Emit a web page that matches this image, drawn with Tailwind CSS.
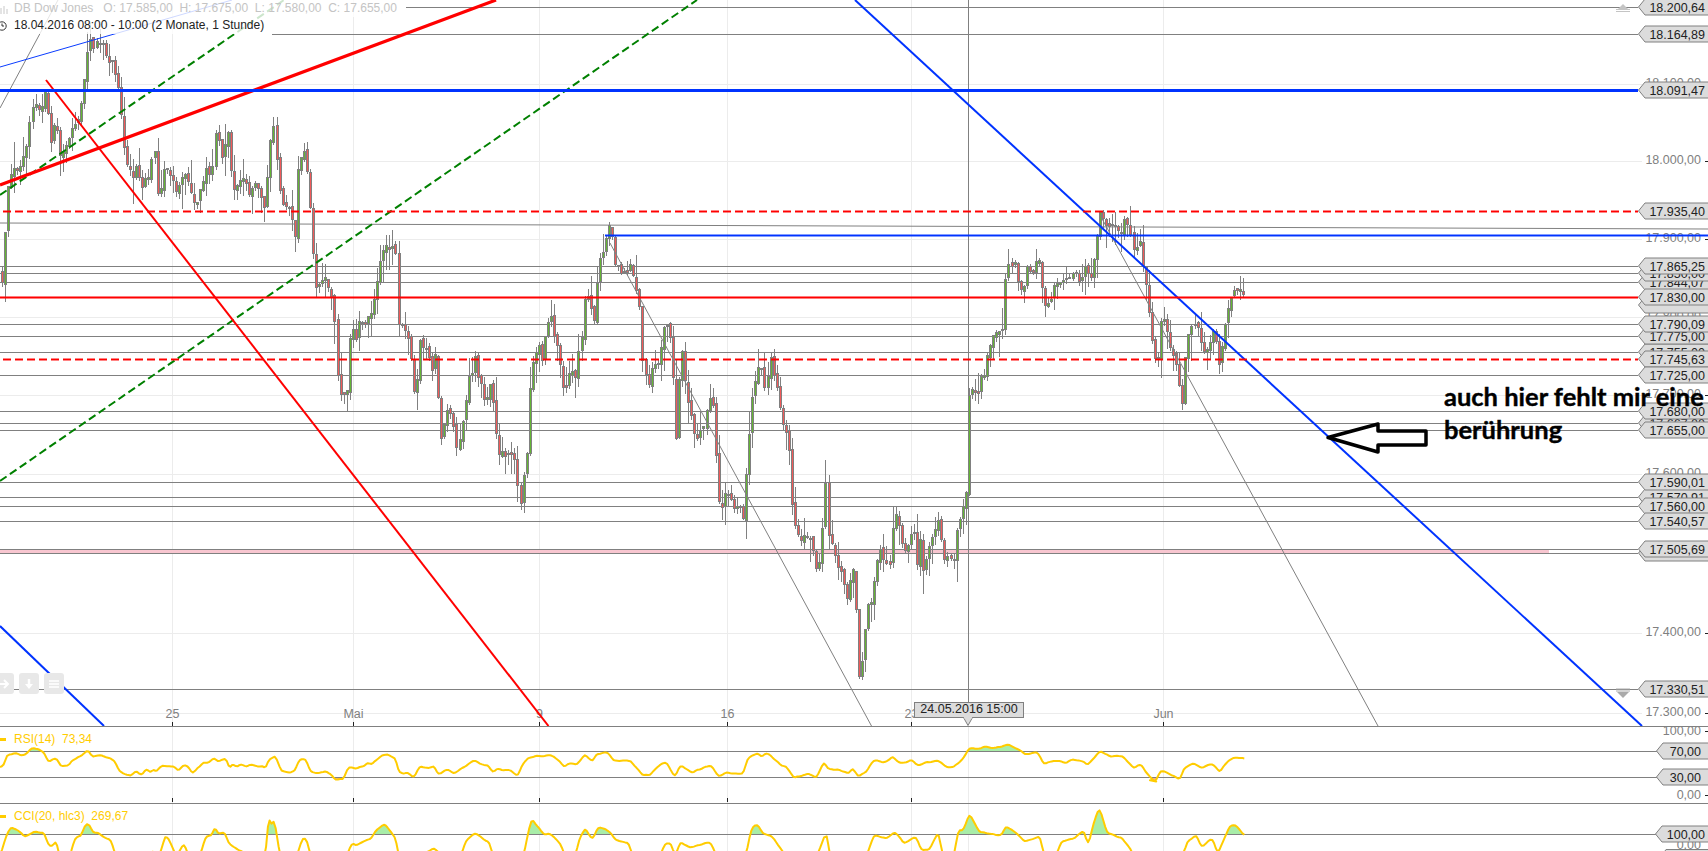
<!DOCTYPE html>
<html lang="de">
<head>
  <meta charset="UTF-8">
  <title>DB Dow Jones</title>
  <script src="https://cdn.jsdelivr.net/npm/@tailwindcss/browser@4"></script>
</head>
<body class="bg-white">
  <div class="flex flex-col w-[1708px] h-[851px] overflow-hidden bg-white font-['Liberation_Sans',Arial,sans-serif] text-[12.5px]">

    <!-- Hauptchart -->
    <section class="relative h-[727px] border-b border-[#808080]">
      <svg id="main" class="block" width="1708" height="726" viewBox="0 0 1708 726"></svg>

      <!-- Kopfzeilen -->
      <div class="absolute left-0 top-0 flex flex-col items-start leading-[17px] text-[12px]">
        <div class="flex items-center h-[17px] w-[406px] bg-white/80 text-[#c4c4c4]">
          <svg class="shrink-0 mr-[6px]" width="8" height="12" viewBox="0 0 8 12"><path d="M1 5v6M4 3v8M7 6v5" stroke="#c8c8c8" fill="none"/></svg>
          <span class="whitespace-pre">DB Dow Jones   O: 17.585,00  H: 17.675,00  L: 17.580,00  C: 17.655,00</span>
        </div>
        <div class="flex items-center h-[17px] w-[272px] bg-white/80 text-[#222]">
          <svg class="shrink-0 mr-[6px]" width="8" height="12" viewBox="0 0 8 12"><circle cx="2" cy="6" r="4.2" stroke="#333" fill="none"/><path d="M2 3.5V6h2" stroke="#333" fill="none"/></svg>
          <span class="whitespace-nowrap">18.04.2016 08:00 - 10:00 (2 Monate, 1 Stunde)</span>
        </div>
      </div>

      <!-- Zoom-Buttons -->
      <div class="absolute left-0 top-[673px] flex gap-[5px] -ml-[6px]">
        <div class="flex items-center justify-center w-[20px] h-[21px] rounded-[3px] bg-[#e8e8e8]">
          <svg width="12" height="10" viewBox="0 0 12 10"><path d="M0 5h9M6 1l4 4-4 4" stroke="#fff" stroke-width="2" fill="none"/></svg>
        </div>
        <div class="flex items-center justify-center w-[20px] h-[21px] rounded-[3px] bg-[#e8e8e8]">
          <svg width="10" height="12" viewBox="0 0 10 12"><path d="M5 1v7" stroke="#fff" stroke-width="2.5"/><path d="M1 6h8L5 11z" fill="#fff"/></svg>
        </div>
        <div class="flex items-center justify-center w-[20px] h-[21px] rounded-[3px] bg-[#e8e8e8]">
          <svg width="12" height="14" viewBox="0 0 12 14"><path d="M1 4h10M1 7h10M1 10h10" stroke="#fff" stroke-width="1.6"/></svg>
        </div>
      </div>

      <!-- Datums-Tooltip -->
      <div class="absolute left-[914px] top-[702px] w-[110px] h-[16px] bg-[#dcdcdc] border border-[#808080] text-[#222] text-center leading-[13px]">24.05.2016 15:00</div>
      <svg class="absolute left-[960px] top-[716px]" width="16" height="11" viewBox="0 0 16 11"><path d="M3.5 1.5 8 9.5l4.5-8" fill="#dcdcdc" stroke="#808080"/><path d="M4 1h8v1.5H4z" fill="#dcdcdc"/></svg>

      <!-- Notiz -->
      <div class="absolute left-[1444px] top-[380px] flex flex-col font-['Lato',sans-serif] font-bold text-[25.5px] text-black leading-[33px] whitespace-nowrap [-webkit-text-stroke:0.4px_black]">
        <span>auch hier fehlt mir eine</span>
        <span>berührung</span>
      </div>
    </section>

    <!-- RSI -->
    <section class="relative h-[77px] border-b border-[#808080]">
      <svg id="rsi" class="block" width="1708" height="76" viewBox="0 727 1708 76"></svg>
      <div class="absolute left-0 top-[3px] flex items-center gap-[8px] text-[12px] text-[#ffcc00] whitespace-pre">
        <span class="w-[6px] h-[3px] bg-[#ffcc00]"></span><span>RSI(14)  73,34</span>
      </div>
    </section>

    <!-- CCI -->
    <section class="relative flex-1">
      <svg id="cci" class="block" width="1708" height="47" viewBox="0 804 1708 47"></svg>
      <div class="absolute left-0 top-[3px] flex items-center gap-[8px] text-[12px] text-[#ffcc00] whitespace-pre">
        <span class="w-[6px] h-[3px] bg-[#ffcc00]"></span><span>CCI(20, hlc3)  269,67</span>
      </div>
    </section>
  </div>

  <script>
    const FONT = "Liberation Sans, Arial, sans-serif";
    const GRAY = "#808080";
    const GRID = "#ececec";
    const TIME_X = [172, 353, 539, 727, 911, 1163];
    const TIME_NAMES = ["25", "Mai", "9", "16", "23", "Jun"];

    // Kursverlauf in Pixeln (x, y), von Hand aus dem Chart abgelesen
    const trace = [[1,272],[3,290],[5,232],[7,193],[12,170],[18,172],[22,160],[26,150],[30,117],[35,100],[39,112],[42,110],[46,90],[50,147],[53,130],[56,120],[60,160],[65,150],[70,135],[75,125],[80,110],[85,75],[88,50],[90,35],[93,50],[97,44],[100,40],[107,58],[113,60],[118,90],[122,130],[126,160],[133,180],[137,165],[142,185],[148,180],[154,150],[158,200],[164,165],[170,175],[175,190],[185,175],[195,205],[200,195],[207,170],[212,175],[215,130],[222,155],[228,130],[232,190],[242,180],[250,195],[258,185],[265,215],[270,140],[274,130],[280,200],[290,215],[295,240],[298,170],[303,150],[308,180],[312,240],[316,290],[325,280],[332,300],[335,330],[338,380],[342,400],[347,395],[350,330],[356,340],[360,320],[366,325],[372,310],[378,275],[384,243],[392,250],[397,260],[398,320],[405,335],[410,350],[413,390],[416,385],[420,340],[426,350],[432,370],[435,350],[438,395],[440,445],[445,420],[450,410],[455,440],[458,450],[462,430],[468,383],[475,360],[480,385],[485,400],[490,385],[495,410],[497,450],[505,455],[512,450],[515,465],[518,495],[520,510],[523,480],[527,450],[529,390],[532,370],[537,345],[543,360],[546,330],[551,320],[555,340],[559,345],[562,387],[565,395],[570,365],[575,380],[580,340],[583,330],[585,293],[590,300],[592,320],[595,330],[597,273],[600,258],[603,250],[607,238],[610,215],[612,240],[615,268],[622,273],[625,275],[630,265],[635,280],[637,290],[640,310],[641,330],[643,370],[645,375],[648,385],[652,370],[655,367],[658,365],[661,345],[663,325],[668,325],[671,340],[672,360],[675,400],[676,443],[678,400],[679,385],[682,350],[684,370],[690,417],[693,420],[695,447],[700,433],[704,425],[708,397],[712,395],[715,440],[717,490],[720,510],[727,490],[732,505],[740,510],[744,520],[746,480],[748,465],[750,420],[752,403],[760,360],[765,387],[770,360],[773,373],[777,387],[780,407],[782,427],[787,433],[790,467],[792,507],[793,530],[797,527],[800,540],[805,540],[809,537],[813,547],[817,570],[818,583],[820,550],[822,533],[825,490],[827,480],[829,550],[832,540],[838,573],[842,570],[845,597],[848,600],[852,570],[855,560],[857,657],[859,680],[862,660],[864,633],[868,607],[872,600],[877,567],[880,550],[885,567],[892,560],[893,513],[897,513],[900,537],[903,550],[907,547],[913,530],[917,563],[919,527],[923,568],[927,553],[932,540],[935,530],[940,520],[943,560],[950,557],[953,572],[957,530],[962,510],[965,503],[967,483],[968,433],[969,387],[973,387],[977,400],[980,382],[983,380],[988,357],[992,340],[997,330],[1002,335],[1004,293],[1007,263],[1010,270],[1013,257],[1017,277],[1023,293],[1028,263],[1032,283],[1037,252],[1040,263],[1043,300],[1047,307],[1052,295],[1057,280],[1067,285],[1072,272],[1080,287],[1085,263],[1090,280],[1095,252],[1100,217],[1108,233],[1113,222],[1120,233],[1125,222],[1130,233],[1135,257],[1140,242],[1147,293],[1150,327],[1157,373],[1160,323],[1163,313],[1168,333],[1172,357],[1177,367],[1183,413],[1185,360],[1190,327],[1195,320],[1202,347],[1208,350],[1213,328],[1218,353],[1220,380],[1223,337],[1230,303],[1233,287],[1240,287],[1245,293]];

    // Indikatoren: abgelesene Punkte der Ausschnitte
    const crop = (pts, ox, oy, sx) => pts.map(p => [ox + p[0] * sx, oy + p[1] / 3]);
    const rsiRaw = [
      ...crop([[0,385],[10,375],[20,345],[45,338],[65,348],[90,325],[110,330],[125,340],[135,365],[160,355],[170,378],[195,375],[200,360],[225,350],[248,328],[255,352],[280,345],[290,352],[310,355],[325,370],[330,390],[350,402],[370,408],[378,392],[395,405],[410,388],[425,395],[430,380],[435,400],[455,375],[480,380],[490,378],[497,395],[512,375],[525,380],[540,402],[565,370],[585,366],[600,355],[610,365],[635,355],[640,385],[650,375],[665,380],[675,375],[690,380],[705,375],[715,380],[740,378],[745,390],[750,358],[775,350],[783,390],[805,395],[810,400],[825,392],[840,358],[855,358],[870,395],[880,400],[900,398],[915,395],[925,403],[940,420],[965,418],[972,382],[985,380],[995,385],[1020,378],[1030,368],[1040,375],[1060,352],[1075,344],[1095,346],[1110,360],[1115,395],[1135,402],[1142,395],[1158,414],[1175,380],[1195,385],[1213,378],[1228,405],[1240,395],[1250,388],[1270,400],[1300,380],[1325,360],[1350,372],[1365,378],[1380,398],[1395,385],[1410,393],[1430,390],[1450,408],[1460,380],[1480,352],[1510,348],[1525,350],[1535,345],[1550,348],[1568,368]], 0, 640, 1/2.8),
      ...crop([[10,380],[25,368],[45,372],[65,342],[85,365],[95,340],[125,335],[140,362],[185,362],[215,405],[235,405],[265,370],[280,370],[300,410],[315,375],[345,398],[380,380],[395,378],[415,408],[440,398],[480,400],[490,355],[515,340],[525,348],[545,340],[575,375],[590,378],[610,412],[650,402],[670,412],[690,365],[700,385],[720,388],[755,400],[765,382],[778,412],[800,395],[820,362],[850,368],[870,350],[890,370],[920,360],[935,378],[950,370],[990,362],[1005,380],[1025,382],[1055,355],[1070,322],[1085,326],[1110,322],[1140,325],[1165,314],[1185,320],[1205,332],[1215,342],[1250,338],[1265,372],[1300,360],[1320,368],[1345,358],[1380,372],[1410,335],[1440,348],[1470,350],[1500,385],[1520,370],[1530,398],[1558,428]], 560, 640, 600/1568),
      ...crop([[0,595],[18,608],[25,578],[35,570],[60,585],[85,600],[95,565],[120,548],[145,563],[175,550],[195,575],[215,548],[235,530],[250,532],[265,536]], 1150, 580, 558/1568)
    ];
    const cciRaw = [
      ...crop([[0,650],[18,585],[30,560],[50,570],[70,590],[95,575],[125,580],[130,600],[140,620],[160,603],[165,650],[195,650],[210,595],[230,585],[237,552],[250,552],[260,578],[275,578],[290,592],[310,600],[325,650],[415,650],[428,625],[432,650],[450,650],[458,592],[472,592],[485,630],[495,650],[515,610],[530,650],[560,650],[575,590],[595,585],[600,560],[610,580],[630,578],[640,610],[655,620],[670,630],[700,650],[745,650],[750,525],[760,560],[772,535],[780,650],[830,650],[848,590],[860,600],[870,650],[970,650],[985,610],[1000,615],[1025,600],[1040,595],[1050,575],[1075,553],[1095,575],[1110,600],[1115,650],[1170,650],[1215,625],[1240,650],[1290,650],[1305,600],[1330,578],[1350,595],[1370,605],[1380,650],[1465,650],[1475,600],[1488,535],[1510,565],[1525,585],[1540,580],[1568,610]], 0, 640, 1/2.8),
      ...crop([[15,650],[40,650],[50,600],[65,565],[85,600],[95,570],[105,560],[130,575],[145,600],[180,610],[190,650],[260,650],[275,610],[290,610],[300,650],[315,605],[340,625],[385,608],[395,610],[410,650],[485,650],[500,565],[515,552],[530,580],[555,590],[590,650],[670,650],[690,595],[697,575],[705,650],[800,650],[820,585],[855,595],[875,575],[900,610],[930,590],[945,630],[965,630],[975,605],[990,575],[1000,650],[1030,650],[1040,570],[1055,570],[1070,520],[1095,575],[1140,585],[1155,585],[1165,558],[1190,575],[1215,605],[1255,590],[1265,650],[1295,650],[1310,605],[1345,595],[1370,570],[1380,620],[1395,545],[1410,503],[1430,580],[1470,595],[1490,625],[1500,650]], 560, 640, 600/1568),
      ...crop([[95,820],[105,785],[130,765],[145,800],[175,773],[190,820],[205,785],[225,735],[240,735],[265,766]], 1150, 580, 558/1568)
    ];

    let seed = 17;
    const rnd = () => (seed = (seed * 16807) % 2147483647) / 2147483647;

    // Linie enger abtasten, etwas Rauschen, dann glätten
    function wobble(pts, amount) {
      const dense = [];
      for (let i = 1; i < pts.length; i++) {
        const a = pts[i - 1], b = pts[i];
        const n = Math.max(1, Math.round((b[0] - a[0]) / 2));
        for (let k = 0; k < n; k++) {
          const t = k / n;
          dense.push([a[0] + (b[0] - a[0]) * t, a[1] + (b[1] - a[1]) * t + (rnd() - 0.5) * amount]);
        }
      }
      dense.push(pts[pts.length - 1]);
      return dense.map((p, i) => {
        const l = dense[i - 1] || p, r = dense[i + 1] || p;
        return [p[0], (l[1] + 2 * p[1] + r[1]) / 4];
      });
    }
    const rsiLine = wobble(rsiRaw, 2);
    const cciLine = wobble(cciRaw, 1.5);

    const hline = (y, x1, x2, color, width, extra = "") =>
      `<line x1="${x1}" y1="${y}" x2="${x2}" y2="${y}" stroke="${color}" stroke-width="${width}" ${extra}/>`;
    const seg = (x1, y1, x2, y2, color, width, extra = "") =>
      `<line x1="${x1}" y1="${y1}" x2="${x2}" y2="${y2}" stroke="${color}" stroke-width="${width}" ${extra}/>`;
    const text = (x, y, s, fill, anchor = "end") =>
      `<text x="${x}" y="${y}" fill="${fill}" font-family="${FONT}" font-size="12.5" text-anchor="${anchor}">${s}</text>`;
    const poly = pts => pts.map(p => p[0].toFixed(1) + "," + p[1].toFixed(1)).join(" ");

    function priceAt(x) {
      for (let i = 1; i < trace.length; i++) {
        if (x <= trace[i][0]) {
          const a = trace[i - 1], b = trace[i];
          return a[1] + (b[1] - a[1]) * (x - a[0]) / (b[0] - a[0]);
        }
      }
      return trace[trace.length - 1][1];
    }

    // Kerzen aus dem Verlauf mit festem Zufall
    function candles() {
      let out = "", prev = priceAt(1);
      for (let x = 2; x < 1245; x += 3.05) {
        const px = Math.round(x);
        const close = Math.round(priceAt(x) + (rnd() - 0.5) * 9);
        const top = Math.min(prev, close), bottom = Math.max(prev, close);
        const hi = top - rnd() * rnd() * 26 - 1, lo = bottom + rnd() * rnd() * 26 + 1;
        out += seg(px + 0.5, Math.round(hi), px + 0.5, Math.round(lo), GRAY, 1);
        const h = Math.max(bottom - top, 1);
        out += `<rect x="${px - 0.5}" y="${top - 0.5}" width="2" height="${h}" fill="${close < prev ? "#64b535" : "#f05a5a"}" stroke="${GRAY}" stroke-width="1"/>`;
        prev = Math.round(close + (rnd() - 0.5) * 5);
      }
      return out;
    }

    function tag(y, label) {
      const t = y - 8, b = y + 8;
      return `<polygon points="1638.5,${y} 1645,${t} 1709,${t} 1709,${b} 1645,${b}" fill="#dcdcdc" stroke="${GRAY}"/>` +
        text(1705, y + 4.5, label, "#222");
    }

    function smallTag(y, label) {
      const t = y - 8, b = y + 8;
      return `<polygon points="1656.5,${y} 1663,${t} 1709,${t} 1709,${b} 1663,${b}" fill="#dcdcdc" stroke="${GRAY}"/>` +
        text(1701, y + 4.5, label, "#222");
    }

    // Hauptchart
    let m = "";
    [84.5, 161.5, 239.5, 317.5, 395.5, 474.5, 633.5, 713.5].forEach(y => { m += hline(y, 0, 1642, GRID, 1); });
    TIME_X.forEach(x => { m += seg(x + 0.5, 0, x + 0.5, 726, GRID, 1); });

    [[84, "18.100,00"], [161, "18.000,00"], [239, "17.900,00"], [317, "17.800,00"], [395, "17.700,00"], [474, "17.600,00"], [633, "17.400,00"], [713, "17.300,00"]].forEach(g => {
      m += text(1701, g[0] + 3, g[1], GRAY);
      m += seg(1705, g[0] + 0.5, 1708, g[0] + 0.5, "#222", 1);
    });
    TIME_X.forEach((x, i) => {
      m += text(x + 0.5, 718, TIME_NAMES[i], GRAY, "middle");
      m += seg(x + 0.5, 722, x + 0.5, 726, "#222", 1);
    });

    [7.5, 34.5, 266.5, 273.5, 282.5, 324.5, 336.5, 352.5, 375.5, 411.5, 423.5, 430.5, 482.5, 497.5, 506.5, 521.5, 689.5].forEach(y => {
      m += hline(y, y < 20 ? 406 : y < 40 ? 272 : 0, 1638, GRAY, 1);
    });
    m += `<rect x="0" y="549.5" width="1549" height="4" fill="#f8c6d0"/>`;
    m += hline(549.5, 0, 1638, GRAY, 1) + hline(553.5, 0, 1638, GRAY, 1);
    m += seg(0, 223, 1708, 229, GRAY, 1);

    m += candles();
    m += seg(968.5, 0, 968.5, 716, GRAY, 1);

    // Trendlinien
    m += seg(0, 108, 58, 0, GRAY, 1);
    m += seg(610, 243, 871.5, 726, GRAY, 1);
    m += seg(1100, 215, 1378, 726, GRAY, 1);
    m += seg(0, 67, 232, 0, "#0a3cff", 1);
    m += seg(0, 195, 284, 0, "#008000", 2, 'stroke-dasharray="8 4"');
    m += seg(0, 481, 697, 0, "#008000", 2, 'stroke-dasharray="8 4"');
    m += seg(0, 185, 496, 0, "#ff0000", 3.2);
    m += seg(46, 80, 548.5, 726, "#ff0000", 2);
    m += seg(855, 0, 1642, 726, "#0033ff", 2);
    m += seg(0, 626, 104, 726, "#0033ff", 2);

    m += hline(90.5, 0, 1638, "#0033ff", 3);
    m += hline(235.5, 605, 1708, "#0033ff", 3, 'opacity="0.3"') + hline(235.5, 605, 1708, "#0033ff", 1.3);
    m += hline(297.5, 0, 1638, "#ff0000", 3, 'opacity="0.35"') + hline(297.5, 0, 1638, "#ff0000", 1.3);
    [211.5, 359.5].forEach(y => {
      m += hline(y, 3, 1638, "#ff0000", 3, 'stroke-dasharray="8 4" opacity="0.3"');
      m += hline(y, 3, 1638, "#ff0000", 1.6, 'stroke-dasharray="8 4"');
    });

    // Kursmarken, die unteren zuerst
    [[553, ""], [305, ""], [282, "17.844,07"], [273, "17.850,00"], [352, "17.755,00"], [336, "17.775,00"], [423, "17.667,00"], [497, "17.570,91"]].forEach(t => { m += tag(t[0], t[1]); });
    [[7, "18.200,64"], [34, "18.164,89"], [90, "18.091,47"], [211, "17.935,40"], [266, "17.865,25"], [297, "17.830,00"], [324, "17.790,09"], [359, "17.745,63"], [375, "17.725,00"], [411, "17.680,00"], [430, "17.655,00"], [482, "17.590,01"], [506, "17.560,00"], [521, "17.540,57"], [549, "17.505,69"], [689, "17.330,51"]].forEach(t => { m += tag(t[0], t[1]); });

    // kleine Pfeile am Rand
    m += `<path d="M1618 9l5-5 5 5z" fill="#c4c4c4"/><path d="M1616 9.5h14M1616 11.5h14" stroke="#c4c4c4"/>`;
    m += `<path d="M1616 689h14M1616 691h14" stroke="#aaa"/><path d="M1617 692h12l-6 6z" fill="#aaa"/>`;

    // Pfeil der Notiz
    m += `<polygon points="1328,437.5 1378,424 1378,431 1426,431 1426,445 1378,445 1378,452" fill="#fff" stroke="#000" stroke-width="3.5" stroke-linejoin="round"/>`;
    document.getElementById("main").innerHTML = m;

    function pane(line, levels, above, below, fillAbove, fillBelow, y0, y1) {
      let s = "";
      TIME_X.concat([968]).forEach(x => { s += seg(x + 0.5, y0, x + 0.5, y1, GRID, 1); });
      const closed = y => poly([[line[0][0], y], ...line, [line[line.length - 1][0], y]]);
      if (above != null) s += `<polygon points="${closed(above)}" fill="${fillAbove}" clip-path="url(#clip-${y0})"/>`;
      if (below != null) s += `<polygon points="${closed(below)}" fill="${fillBelow}" clip-path="url(#clipb-${y0})"/>`;
      s += `<defs><clipPath id="clip-${y0}"><rect x="0" y="${y0}" width="1708" height="${above - y0}"/></clipPath>` +
        (below != null ? `<clipPath id="clipb-${y0}"><rect x="0" y="${below}" width="1708" height="${y1 - below}"/></clipPath>` : "") + `</defs>`;
      levels.forEach(y => { s += hline(y, 0, 1660, GRAY, 1); });
      s += `<polyline points="${poly(line)}" fill="none" stroke="#ffcc00" stroke-width="2" stroke-linejoin="round"/>`;
      return s;
    }

    let r = pane(rsiLine, [751.5, 777.5], 751.5, 777.5, "#a8eda8", "#f2a6a6", 727, 803);
    TIME_X.forEach(x => { r += seg(x + 0.5, 798, x + 0.5, 802, "#222", 1); });
    r += text(1701, 735, "100,00", GRAY) + seg(1705, 731.5, 1708, 731.5, "#222", 1);
    r += text(1701, 799, "0,00", GRAY) + seg(1705, 795.5, 1708, 795.5, "#222", 1);
    r += smallTag(751, "70,00") + smallTag(777, "30,00");
    document.getElementById("rsi").innerHTML = r;

    let c = pane(cciLine, [834.5], 834.5, null, "#a8eda8", "", 804, 851);
    c += text(1701, 849, "0,00", GRAY);
    c += `<polygon points="1661.5,856 1666,849.5 1709,849.5 1709,860 1666,860" fill="#dcdcdc" stroke="${GRAY}"/>`;
    c += `<polygon points="1655.5,834 1662,826 1709,826 1709,842 1662,842" fill="#dcdcdc" stroke="${GRAY}"/>` + text(1705, 838.5, "100,00", "#222");
    document.getElementById("cci").innerHTML = c;
  </script>
</body>
</html>
